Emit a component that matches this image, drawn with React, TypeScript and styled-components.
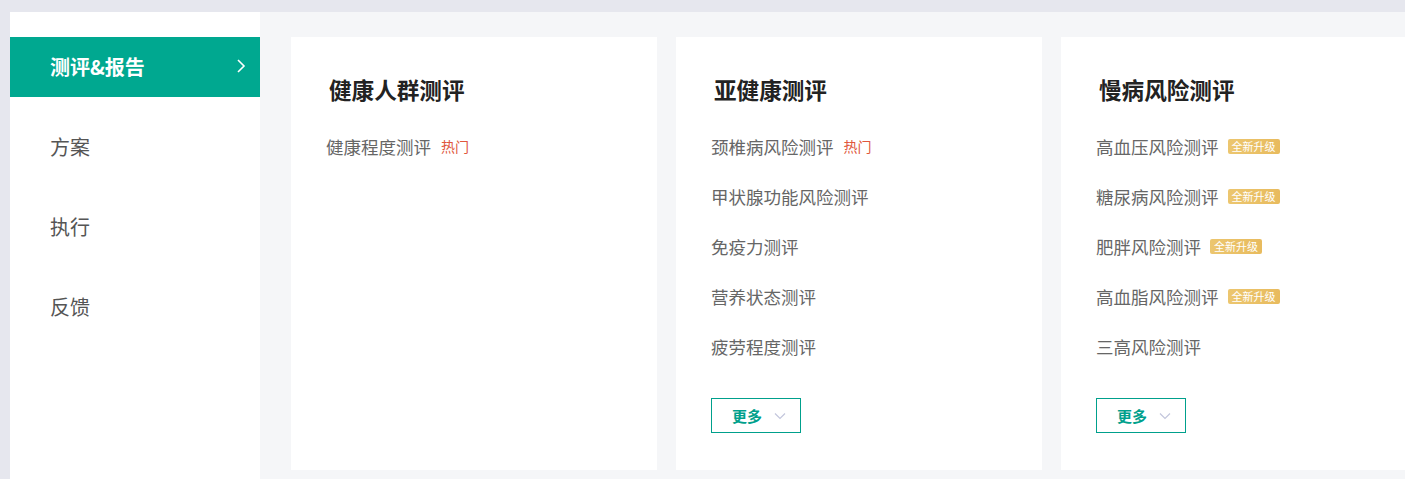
import React from "react";
import styled, { createGlobalStyle } from "styled-components";

type Tag = "hot" | "new" | undefined;

interface Entry {
  name: string;
  tag?: Tag;
}

interface Group {
  title: string;
  items: Entry[];
  more?: boolean;
}

const groups: Group[] = [
  {
    title: "健康人群测评",
    items: [{ name: "健康程度测评", tag: "hot" }],
  },
  {
    title: "亚健康测评",
    items: [
      { name: "颈椎病风险测评", tag: "hot" },
      { name: "甲状腺功能风险测评" },
      { name: "免疫力测评" },
      { name: "营养状态测评" },
      { name: "疲劳程度测评" },
    ],
    more: true,
  },
  {
    title: "慢病风险测评",
    items: [
      { name: "高血压风险测评", tag: "new" },
      { name: "糖尿病风险测评", tag: "new" },
      { name: "肥胖风险测评", tag: "new" },
      { name: "高血脂风险测评", tag: "new" },
      { name: "三高风险测评" },
    ],
    more: true,
  },
];

const menu = ["测评&报告", "方案", "执行", "反馈"];

const GlobalStyle = createGlobalStyle`
  html, body {
    margin: 0;
    padding: 0;
    background: #e6e7ee;
    font-family: "Noto Sans CJK SC", "Noto Sans", sans-serif;
  }
`;

export default function App() {
  return (
    <>
      <GlobalStyle />
      <Page>
        <Sidebar>
          {menu.map((label, i) => (
            <MenuItem key={label} $active={i === 0}>
              {label}
              {i === 0 && (
                <svg width="10" height="16" viewBox="0 0 10 16">
                  <path d="M2 2l6 6-6 6" fill="none" stroke="#fff" strokeWidth="1.6" />
                </svg>
              )}
            </MenuItem>
          ))}
        </Sidebar>
        <Content>
          {groups.map((g) => (
            <Card key={g.title}>
              <CardTitle>{g.title}</CardTitle>
              <List>
                {g.items.map((item) => (
                  <Row key={item.name}>
                    {item.name}
                    {item.tag === "hot" && <HotTag>热门</HotTag>}
                    {item.tag === "new" && <NewBadge>全新升级</NewBadge>}
                  </Row>
                ))}
              </List>
              {g.more && (
                <MoreButton>
                  更多
                  <svg width="12" height="8" viewBox="0 0 12 8">
                    <path d="M1 1.5l5 5 5-5" fill="none" stroke="#c3c6dc" strokeWidth="1.2" />
                  </svg>
                </MoreButton>
              )}
            </Card>
          ))}
        </Content>
      </Page>
    </>
  );
}

const Page = styled.div`
  display: flex;
  padding: 12px 0 0 10px;
  height: 479px;
  box-sizing: border-box;
  overflow: hidden;
`;

const Sidebar = styled.nav`
  width: 250px;
  flex-shrink: 0;
  background: #fff;
  padding-top: 25px;
  display: flex;
  flex-direction: column;
  gap: 20px;
`;

const MenuItem = styled.div<{ $active?: boolean }>`
  height: 60px;
  display: flex;
  align-items: center;
  justify-content: space-between;
  padding: 0 14px 2px 40px;
  box-sizing: border-box;
  font-size: 20px;
  font-weight: ${(p) => (p.$active ? 700 : 400)};
  color: ${(p) => (p.$active ? "#fff" : "#555")};
  background: ${(p) => (p.$active ? "#00a890" : "transparent")};
`;

const Content = styled.main`
  flex: 1;
  background: #f5f6f8;
  padding: 25px 0 0 31px;
  display: flex;
  gap: 19px;
  overflow: hidden;
`;

const Card = styled.section`
  width: 366px;
  height: 433px;
  flex-shrink: 0;
  background: #fff;
  padding: 38px 35px 0;
  box-sizing: border-box;
`;

const CardTitle = styled.h3`
  margin: 0 0 16px 3px;
  font-size: 22.6px;
  line-height: 30px;
  font-weight: 700;
  color: #222;
`;

const List = styled.ul`
  list-style: none;
  margin: 0;
  padding: 0;
`;

const Row = styled.li`
  height: 50px;
  display: flex;
  align-items: center;
  font-size: 17.5px;
  color: #666;
`;

const HotTag = styled.span`
  margin-left: 10px;
  font-size: 14px;
  color: #e0573c;
`;

const NewBadge = styled.span`
  margin-left: 9px;
  padding: 0 4px;
  height: 15px;
  line-height: 15px;
  font-size: 11px;
  color: #fff;
  background: linear-gradient(90deg, #ecc66f, #e8bb5e);
  border-radius: 2px;
`;

const MoreButton = styled.button`
  margin-top: 27px;
  width: 90px;
  height: 35px;
  display: flex;
  align-items: center;
  justify-content: center;
  gap: 12px;
  background: #fff;
  border: 1px solid #00a08c;
  color: #00a08c;
  font-family: inherit;
  font-size: 15px;
  font-weight: 700;
  padding: 0 0 0 6px;
  cursor: pointer;
`;
